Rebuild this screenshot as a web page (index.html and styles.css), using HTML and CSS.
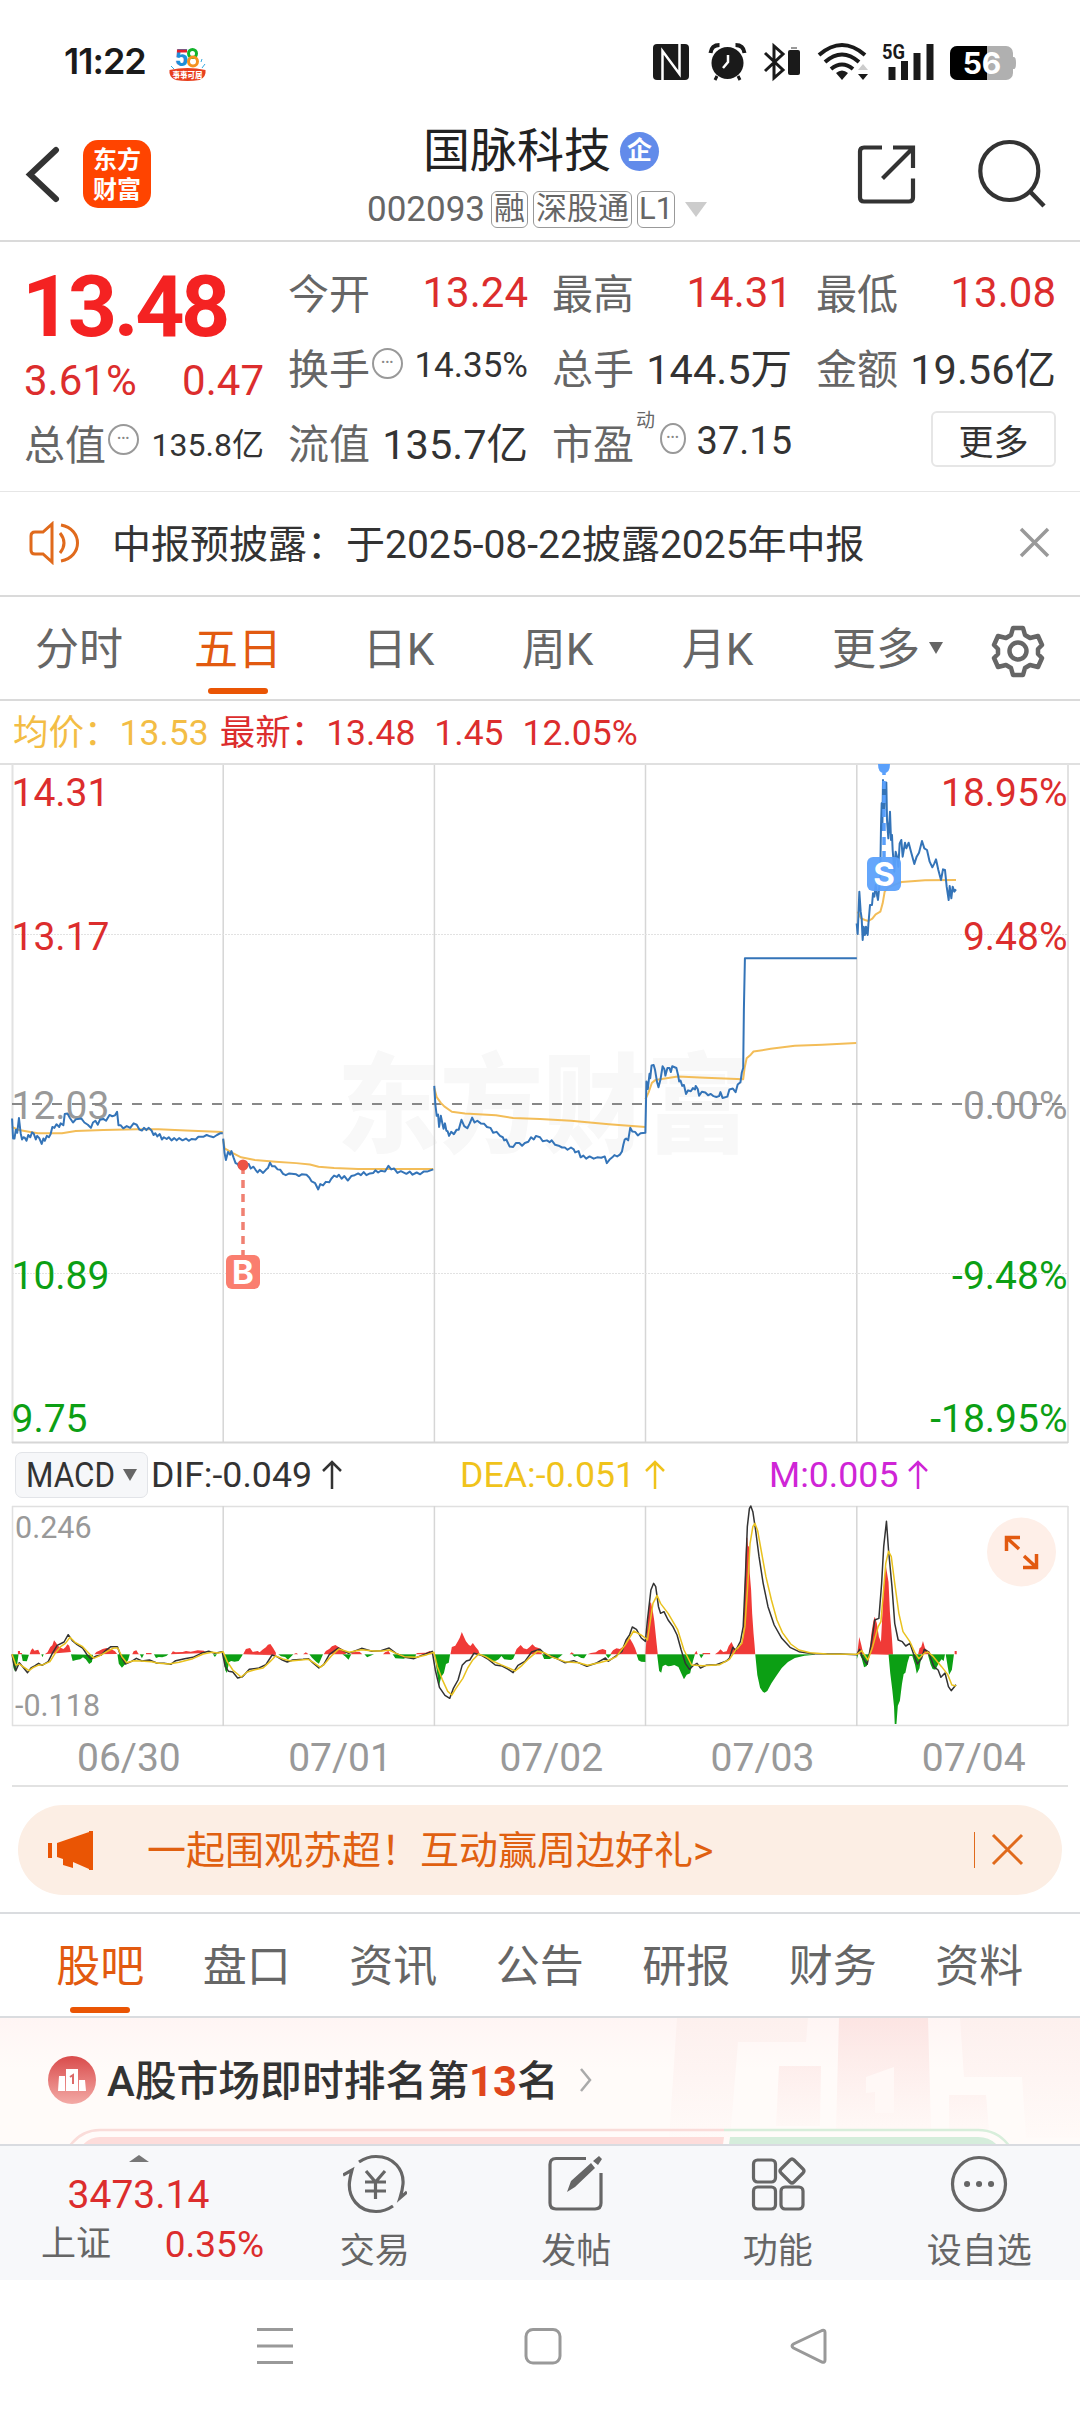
FILE: index.html
```html
<!DOCTYPE html>
<html lang="zh-CN">
<head>
<meta charset="utf-8">
<title>国脉科技 002093</title>
<link rel="stylesheet" href="styles.css">
</head>
<body>
<div class="app">

<div class="status">
  <span class="clock">11:22</span>
  <svg class="promo" width="42" height="44" viewBox="167 42 42 44">
    <text x="175" y="66" class="promo-digit" fill="#1c8fd8">5</text>
    <path d="M177 51h10" stroke="#e0202c" stroke-width="3"/>
    <circle cx="192.500" cy="53.500" r="4" fill="none" stroke="#12b32b" stroke-width="3"/>
    <circle cx="193" cy="61.500" r="4.500" fill="none" stroke="#f5921e" stroke-width="3"/>
    <path d="M171 66l3 3M205 64l-3 4M201 62l1-3" stroke="#35a9e0" stroke-width="1"/>
    <path d="M169.500 70q18-4 36 0q1 7-6 10q-12 2-24 0q-7-3-6-10z" fill="#e8401f"/>
    <text x="172.500" y="78" class="promo-tag">事事可居</text>
  </svg>
  <svg class="sys" width="370" height="44" viewBox="650 40 370 44">
    <rect x="653" y="44" width="36" height="36" rx="4" fill="#1a1a1a"/>
    <path d="M662.500 80V51l17 23V44" fill="none" stroke="#fff" stroke-width="2.500"/>
    <circle cx="727.500" cy="63" r="16" fill="#1a1a1a"/>
    <path d="M717 76l-2 4M738 76l2 4" stroke="#1a1a1a" stroke-width="3"/>
    <path d="M710.500 53q1-8 9-8M744.500 53q-1-8-9-8" fill="none" stroke="#1a1a1a" stroke-width="4"/>
    <path d="M728 55v7l-5 6" fill="none" stroke="#fff" stroke-width="2.500"/>
    <path d="M765 53l18 17-9 8V46l9 8-18 17" fill="none" stroke="#1a1a1a" stroke-width="3"/>
    <rect x="788" y="50" width="12" height="25" rx="2" fill="#1a1a1a"/><path d="M791 48h6" stroke="#999" stroke-width="2"/>
    <path d="M819 55q23-20 46 0M825 62q17-15 34 0M831 69q11-9 22 0" fill="none" stroke="#1a1a1a" stroke-width="4"/>
    <path d="M836 73q6-5 12 0l-6 7z" fill="#1a1a1a"/>
    <path d="M858 70h10l-5-6z" fill="#ccc"/><path d="M858 74h10l-5 6z" fill="#1a1a1a"/>
    <text x="882" y="59" class="net" textLength="23" lengthAdjust="spacingAndGlyphs">5G</text>
    <path d="M892 67v13M904.500 61v19M917 53v27M930 44v36" stroke="#1a1a1a" stroke-width="7"/>
    <path d="M1010 46h-4h-49a7 7 0 0 0-7 7v20a7 7 0 0 0 7 7h49a7 7 0 0 0 7-7v-4h1q2 0 2-6t-2-6h-1v-4a7 7 0 0 0-7-7z" fill="#b0b0b0"/>
    <path d="M987 46h-30a7 7 0 0 0-7 7v20a7 7 0 0 0 7 7h30z"/>
    <text x="982" y="74" class="charge">56</text>
  </svg>
</div>

<header class="top">
  <svg class="back" width="36" height="60" viewBox="24 144 36 60"><path d="M56 150L30 174.500L56 199" fill="none" stroke="#333" stroke-width="6" stroke-linecap="round"/></svg>
  <div class="logo"><span>东方</span><span>财富</span></div>
  <div class="stock">
    <div class="name">国脉科技<span class="corp">企</span></div>
    <div class="code">002093<span class="tag">融</span><span class="tag">深股通</span><span class="tag level">L1</span><i class="down"></i></div>
  </div>
  <svg class="tools" width="190" height="76" viewBox="856 138 190 76" fill="none" stroke="#333" stroke-width="4.200">
    <path d="M882 147.500H864q-4 0-4 4V197.500q0 4 4 4H909q4 0 4-4V178.500M893 147.500H913V168M882.500 178.500L913 148"/>
    <circle cx="1009.300" cy="171" r="29"/><path d="M1030 191.500L1044 206" stroke-width="4.500"/>
  </svg>
</header>

<section class="quote">
  <div class="col">
    <div class="price">13.48</div>
    <div class="row change"><span>3.61%</span><span>0.47</span></div>
    <div class="row"><label>总值</label><i class="info">•••</i><b class="s">135.8亿</b></div>
  </div>
  <div class="col">
    <div class="row"><label>今开</label><b class="up">13.24</b></div>
    <div class="row"><label>换手</label><i class="info">•••</i><b class="m">14.35%</b></div>
    <div class="row"><label>流值</label><b>135.7亿</b></div>
  </div>
  <div class="col">
    <div class="row"><label>最高</label><b class="up">14.31</b></div>
    <div class="row"><label>总手</label><b>144.5万</b></div>
    <div class="row"><label>市盈</label><sup>动</sup><i class="info pe">•••</i><b class="l">37.15</b></div>
  </div>
  <div class="col">
    <div class="row"><label>最低</label><b class="up">13.08</b></div>
    <div class="row"><label>金额</label><b>19.56亿</b></div>
    <div class="row end"><button class="more">更多</button></div>
  </div>
</section>

<section class="notice">
  <svg width="52" height="44" viewBox="29 521 52 44" fill="none" stroke="#e06a1c" stroke-width="3"><path d="M52 524v38l-9-8h-8q-4 0-4-4V536q0-4 4-4h8zM60 533q8 10 0 20M61 525c22 4 22 32 0 36" /></svg>
  <p>中报预披露：于2025-08-22披露2025年中报</p>
  <svg width="32" height="32" viewBox="0 0 32 32"><path d="M2 2L29 29M29 2L2 29" stroke="#999" stroke-width="3.500"/></svg>
</section>

<nav class="periods">
  <span>分时</span><span class="on">五日</span><span>日K</span><span>周K</span><span>月K</span><span>更多<i class="tri"></i></span>
  <svg width="54" height="54" viewBox="0 0 54 54" fill="none" stroke="#666" stroke-width="4.500" stroke-linejoin="round"><path d="M22 4h10l2 7 5 3 8-2 4 9-4 4v5l4 4-4 9-8-2-5 3-2 7H22l-2-7-5-3-8 2-4-9 4-4v-5l-4-4 4-9 8 2 5-3z"/><circle cx="27" cy="27" r="8.500"/></svg>
</nav>

<div class="legend"><span class="avg">均价：13.53</span><span>最新：13.48</span><span>1.45</span><span>12.05%</span></div>

<svg class="chart" width="1080" height="682" viewBox="0 763 1080 682">
  <text class="mark" x="337" y="1144" textLength="412" lengthAdjust="spacingAndGlyphs">东方财富</text>
  <g fill="none" stroke="#d6d6d6" stroke-width="2">
    <path d="M0 764H1080" stroke-width="1.500"/>
    <path d="M12.500 764V1443M1068 764V1443" stroke="#e2e2e2" stroke-width="2"/>
    <path d="M223.200 765V1443M434.400 765V1443M645.500 765V1443M856.800 765V1443" stroke-width="1.500"/>
    <path d="M12 1442.500H1068"/>
    <path d="M12 934.500H1068M12 1273.500H1068" stroke="#e2e2e2" stroke-width="1" stroke-dasharray="2 1"/>
  </g>
  <g class="axis">
    <text x="11.500" y="805.500" class="r">14.31</text><text x="11.500" y="950" class="r">13.17</text><text x="11.500" y="1118.500" class="n">12.03</text><text x="11.500" y="1289" class="g">10.89</text><text x="11.500" y="1431.500" class="g">9.75</text>
    <g text-anchor="end"><text x="1067.500" y="805.500" class="r">18.95%</text><text x="1067.500" y="950" class="r">9.48%</text><text x="1067.500" y="1118.500" class="n">0.00%</text><text x="1067.500" y="1289" class="g">-9.48%</text><text x="1067.500" y="1431.500" class="g">-18.95%</text></g>
  </g>
  <path d="M12 1104H1066" stroke="#888" stroke-width="2" stroke-dasharray="10 10"/>
  <g transform="translate(0 760) scale(.34439 .44643)">
    <g class="avg-line">
      <polyline points="35,822 55,829 80,832 110,836 180,836 220,831 300,829 400,827 460,827 540,830 647,833"/>
      <polyline points="648,850 652,870 675,880 700,890 740,896 800,900 860,903 900,906 925,911 970,914 1040,916 1258,916"/>
      <polyline points="1261,735 1268,755 1280,768 1290,776 1312,788 1350,792 1440,796 1490,802 1568,804 1658,808 1768,816 1874,822"/>
      <polyline points="1874,760 1883,745 1893,723 1903,717 1968,709 2048,712 2158,715 2162,690 2168,668 2180,660 2188,653 2238,647 2308,640 2388,638 2486,634"/>
    </g>
    <g class="price-line">
      <polyline points="35,803 38,848 42,848 46,828 50,835 55,802 60,836 64,850 68,845 72,846 77,853 82,840 88,845 93,834 98,837 104,850 108,842 114,847 121,860 126,848 130,853 136,842 142,845 147,838 152,822 158,824 164,816 172,822 176,814 184,818 188,793 196,792 203,802 212,812 220,805 236,803 245,812 255,817 264,824 270,812 277,808 284,817 290,806 300,804 308,808 318,795 326,798 334,796 340,788 344,818 350,818 358,825 368,820 378,824 388,814 397,817 405,828 412,830 418,824 425,829 432,824 440,830 446,840 451,836 457,843 464,838 470,850 476,845 484,849 490,845 498,852 506,847 513,852 520,847 530,852 540,848 548,853 556,849 568,850 576,844 590,844 600,840 610,843 620,845 630,840 640,836 647,836"/>
      <polyline points="648,848 652,880 656,896 662,878 668,884 672,876 678,890 684,903 690,905 695,912 700,906 722,905 728,915 736,911 742,918 748,924 754,918 764,925 772,918 778,914 784,902 790,910 798,910 806,917 814,918 822,927 830,930 840,926 860,928 868,932 876,928 890,929 898,935 905,944 915,948 924,962 930,950 938,953 946,945 956,946 962,938 970,931 978,934 984,929 992,938 1000,932 1010,942 1020,932 1030,930 1040,926 1048,930 1056,923 1064,930 1074,926 1084,925 1090,919 1098,924 1106,920 1118,922 1128,909 1136,917 1144,915 1154,925 1164,921 1180,927 1190,922 1198,929 1210,924 1220,928 1230,922 1240,922 1258,917"/>
      <polyline points="1261,730 1264,770 1268,797 1272,794 1275,822 1280,797 1284,812 1288,826 1292,814 1296,830 1300,832 1304,842 1310,833 1318,838 1326,828 1332,828 1340,806 1348,820 1357,825 1364,814 1371,801 1378,812 1386,808 1396,814 1406,815 1414,822 1424,824 1432,835 1442,833 1452,842 1460,845 1464,852 1470,850 1480,866 1490,867 1498,858 1508,858 1516,864 1524,858 1534,855 1542,845 1550,850 1556,842 1568,845 1576,854 1588,852 1596,856 1602,852 1612,862 1622,864 1632,868 1640,868 1648,873 1658,868 1666,872 1670,879 1680,876 1686,890 1694,886 1702,893 1712,888 1724,893 1734,890 1746,891 1756,888 1762,903 1770,895 1778,890 1784,885 1792,888 1800,884 1806,877 1810,862 1814,850 1818,848 1824,852 1830,824 1836,832 1844,833 1852,841 1860,836 1874,835 1877,720 1881,737 1886,703 1888,713 1892,684 1898,683 1902,694 1908,722 1912,733 1918,715 1924,686 1929,692 1932,707 1938,690 1944,690 1948,699 1952,686 1964,690 1969,706 1972,720 1976,718 1981,730 1986,728 1992,748 1998,740 2006,742 2012,735 2018,738 2020,730 2026,737 2030,752 2038,743 2048,745 2056,751 2064,748 2072,753 2080,755 2088,753 2092,744 2098,757 2112,754 2118,738 2128,736 2136,744 2142,727 2150,722 2154,700 2158,690 2160,560 2163,444 2488,444"/>
    </g>
  </g>
  <g transform="translate(845 760) scale(.33333)">
    <polyline class="avg-line" points="38,455 48,475 60,480 70,483 82,476 92,463 106,455 113,430 119,395 130,382 170,366 240,361 333,360"/>
    <polyline class="price-line" points="35,490 38,522 43,395 47,455 50,475 53,540 56,500 60,525 63,500 68,525 70,495 75,435 81,435 84,400 88,410 92,375 96,405 99,420 103,380 106,330 108,200 110,130 112,210 114,60 118,150 121,70 124,68 126,180 130,235 135,155 138,240 141,225 143,270 148,335 152,275 156,290 160,320 164,250 169,240 173,290 180,248 184,265 191,248 198,275 208,312 215,290 222,278 231,243 238,265 246,270 254,305 262,322 268,310 273,298 280,330 288,360 294,328 300,330 305,380 311,420 314,378 319,415 323,380 328,395 333,388"/>
  </g>
  <path d="M243 1166V1255" stroke="#f08072" stroke-width="3.500" stroke-dasharray="8 6"/>
  <circle cx="243" cy="1165" r="5.500" fill="#ee5345"/>
  <rect x="226" y="1255" width="34" height="34" rx="6" fill="#fa7e6f"/><text class="bs" x="243" y="1284">B</text>
  <path d="M884 767V857" stroke="#5aa0fb" stroke-width="3.500" stroke-dasharray="8 6"/>
  <path d="M878 764h12q0 9-6 9t-6-9z" fill="#5aa0fb"/>
  <rect x="867" y="857" width="34" height="34" rx="6" fill="#5aa0fb" fill-opacity=".94"/><text class="bs" x="884" y="886">S</text>
</svg>

<div class="macd-bar">
  <span class="pill"><span class="condensed">MACD</span><i class="tri"></i></span>
  <span class="dif">DIF:-0.049<svg width="20" height="30" viewBox="0 0 20 30"><path d="M10 29V2M1 11L10 2L19 11"/></svg></span>
  <span class="dea">DEA:-0.051<svg width="20" height="30" viewBox="0 0 20 30"><path d="M10 29V2M1 11L10 2L19 11"/></svg></span>
  <span class="mm">M:0.005<svg width="20" height="30" viewBox="0 0 20 30"><path d="M10 29V2M1 11L10 2L19 11"/></svg></span>
</div>

<svg class="chart" width="1080" height="222" viewBox="0 1505 1080 222">
  <g fill="none" stroke="#d6d6d6" stroke-width="1.500">
    <path d="M12 1506.500H1068M12 1725.500H1068M12.500 1506V1726M1068 1506V1726" stroke="#e0e0e0"/>
    <path d="M223.200 1506V1726M434.400 1506V1726M645.500 1506V1726M856.800 1506V1726"/>
  </g>
  <g class="macd-axis"><text x="15" y="1538">0.246</text><text x="15" y="1716">-0.118</text></g>
  <g transform="translate(0 1440) scale(.34439 .33333)">
    <path fill="#f03a37" d="M52 643v-10h6v6h6v4zM86 643l4-12 5-6 5 7 5-1 6-2 6 14zM130 643l8-6 8-16 6-5 5-15 6 8 5 8 8 6 8 4 6-5 6-9 5 4 5 19zM274 643l6-7 8-4 10-5 12-3 14 4 10 6 6 8zM384 643l4-9 8-3 6 10 5 2zM424 643v-4h16v4zM496 643l6-9 8 3 20-1 10-3 14 2 20-4 18 1 6 7zM706 643l8-16 12-3 8 12 14-3 6 4 8-8 10-7 6-8 7-2 8 12 8 14v8zM852 643l8-4 6 4zM880 643l8-6 8 6zM940 643l6-10 10-6 8-8 10-4 10 7 10 6 10 8v7zM1018 643l6-6 20-2 8 8zM1112 643l6-6 10-4 6 10zM1206 643l6-4 24-1 12-5 8 10zM1308 643l4-22 10-4 8-14 5-10 6-17 4 10 8 18 8 10 5 4 7-9 8 12 8 10 4 12zM1494 643l6-16 12-12 8 10 10 3 8-7 8-8 8 8 12 4 8 18zM1654 643l6-6 8 6zM1706 643l10-4 14-2 8-6 12-4 10 4v12zM1772 643l8-12 10-6 10 2 8-6 8-14 8-14 6 4 8 14 6 14 6 18zM1874 643l6-90 4-56 6-11 6 30 4 28 6 60 4 39zM2016 643l6-11 4 11zM2040 643v-4h22v4z"/>
    <path fill="#f03a37" d="M2076 643L2086 635L2092 628L2100 636L2110 634L2116 618L2124 606L2132 624L2142 628L2152 612L2158 595L2161 480L2164 380L2167 293L2170 293L2172 318L2175 320L2177 400L2181 450L2184 520L2188 580L2191 615L2193 643z"/>
    <path fill="#f03a37" d="M2489 643l6-52 6 24 6 28zM2524 643l6-60 6-40 4-13 6 20 6 40 6 16 4-80 4-80 6-70 8 50 4 90 6 80 3 49zM2666 643l4-18 5-4 5-18 6 22 8 8 6 2 2 8zM2772 643v-10h6v10z"/>
    <path fill="#0c9f14" d="M35 643l4 40 5 12 6-24 4-28zM62 643l4 20 12 1 6-20zM120 643l3 9 4-9zM206 643l5 20 10-3 12-2 8-6 8 6 10 14 8-6 3-22zM341 643l4 28 9 12 10-11 8-12 5-17zM406 643l6 12 6-12zM447 643l6 11 8-3 10 1 12-4 6-5zM618 643l6 8 6-8zM648 643l6 48 5 8 6-32 6-4 10 2 12-2 10-16 2-4zM808 643l8 6 12 2 8 8 16-16zM898 643l8 10 12 12 8 6 6-14 6-14zM994 643l8 6 10 10 8-16zM1058 643l8 9 10-5 10-4zM1140 643l8 12 24 1 12-4 14 4 8-5 2-8zM1262 643l5 40 8 54 6-26 8-12 6-27 8-4 4-25zM1398 643l12 10 16 10 14-1 8-4 8-10 8 10 20 2 6-4 6-13zM1574 643l6 14 16 0 8-4 10 4 10-5 10-9zM1660 643l8 7 8-3 12 7 8 1 8-12zM1758 643l8 12 10-12zM1848 643l6 18 8 4 12 1v-23zM1908 643l6 50 6 5 4-19 8-5 8 5 8-1 10-3 12 6 10 23 6 14 8-14 10-4 8-36 6-21zM2030 643l6 12 8-12zM2193 643l6 62 8 38 8 12 5 3 8-5 12-23 14-22 16-24 18-18 20-12 28-7 30-3v-1zM2488 643v15l4-15zM2496 643l6 12 7 27 8-4 7-35zM2580 643l5 57 6 50 5 50 2 52h5l4-55 6-15 6-50 5-30 5-4 6-30 6-20 8 0 8 26 5 27 8-16 6-42zM2694 643l8 30 6 14 8 2 10-20 8-11 6 5 4-20zM2746 643l6 38 4 23 8-15 6-46z"/>
    <path stroke="#fff" stroke-opacity=".45" d="M35 643H2776"/>
    <g class="sig dif-line">
      <polyline points="35,643 40,672 46,692 56,668 66,680 80,698 90,684 102,677 112,670 122,676 140,665 152,640 166,616 186,606 198,584 210,602 224,614 240,624 254,646 264,657 280,648 294,645 306,632 322,620 341,620 350,646 364,672 382,664 396,655 412,663 434,660 455,669 476,670 496,673 510,662 536,656 560,652 584,640 606,634 624,640 645,635 654,680 664,694 676,696 690,714 704,710 724,688 752,684 772,674 790,645 804,650 820,660 834,666 850,660 880,658 896,656 908,668 926,684 940,674 956,644 982,624 1012,640 1050,625 1080,634 1106,632 1130,624 1150,640 1176,652 1202,656 1224,646 1255,634 1264,690 1276,742 1292,766 1306,775 1316,746 1330,720 1342,676 1354,663 1364,660 1376,640 1398,646 1418,658 1438,675 1458,678 1476,688 1490,698 1504,676 1524,664 1544,636 1568,628 1586,646 1610,652 1640,668 1666,662 1684,670 1704,679 1730,670 1744,662 1758,654 1766,664 1788,648 1806,634 1818,600 1828,585 1836,561 1848,568 1862,594 1874,604 1880,540 1890,450 1898,430 1904,440 1912,500 1918,520 1928,515 1940,540 1954,560 1966,585 1978,630 1990,670 2002,688 2014,676 2024,670 2034,684 2050,676 2080,674 2108,664 2118,655 2128,622 2136,632 2150,604 2158,560 2164,420 2170,260 2176,206 2180,198 2186,215 2194,270 2204,350 2216,430 2230,500 2248,555 2270,595 2294,622 2320,635 2360,641 2440,642 2488,644 2496,628 2504,652 2518,673 2530,610 2540,540 2552,535 2560,430 2566,320 2574,244 2580,330 2590,440 2598,550 2608,600 2620,605 2630,618 2642,610 2652,640 2664,672 2676,655 2684,628 2696,636 2712,680 2724,690 2732,712 2744,699 2754,740 2762,752 2776,734"/>
    </g>
    <g class="sig dea-line">
      <polyline points="35,643 46,675 56,672 70,682 84,692 96,683 110,676 125,674 145,665 160,640 176,620 190,610 203,592 218,607 240,620 258,640 272,655 290,647 310,635 330,624 342,624 354,650 368,668 388,662 408,663 440,665 462,670 490,672 520,667 560,656 590,642 615,637 635,639 648,635 660,665 676,690 700,711 718,696 740,689 764,684 784,665 800,648 824,658 844,663 874,660 895,658 910,667 930,682 944,670 962,648 984,627 1014,637 1050,629 1084,633 1110,633 1130,630 1150,640 1174,650 1210,652 1240,644 1260,637 1270,680 1284,718 1300,754 1312,765 1324,745 1344,715 1358,684 1372,661 1390,642 1410,650 1430,663 1454,674 1480,685 1496,693 1516,676 1536,655 1560,634 1580,638 1600,650 1640,665 1680,668 1706,676 1740,668 1770,660 1790,650 1815,615 1840,573 1860,584 1874,594 1880,600 1888,545 1896,490 1908,466 1918,490 1940,520 1968,570 1986,630 2008,675 2040,677 2090,674 2118,658 2136,630 2154,610 2163,560 2171,440 2178,310 2186,260 2192,250 2200,272 2210,330 2224,410 2240,480 2256,540 2272,578 2296,612 2320,630 2352,638 2400,642 2488,643 2502,632 2520,660 2534,620 2550,560 2558,545 2564,470 2572,370 2580,334 2588,350 2598,430 2610,520 2622,575 2642,605 2656,637 2668,656 2684,640 2694,636 2710,650 2734,680 2752,704 2764,735 2776,738"/>
    </g>
  </g>
  <circle cx="1021.500" cy="1552" r="34.500" fill="#feefe8"/>
  <path d="M1020 1537.500H1006.500V1551M1007 1538L1019 1549M1023 1567.500H1036.500V1554M1036 1567L1024 1556" fill="none" stroke="#e25a10" stroke-width="3.500"/>
</svg>
<div class="dates"><span>06/30</span><span>07/01</span><span>07/02</span><span>07/03</span><span>07/04</span></div>

<div class="banner">
  <svg width="46" height="42" viewBox="48 1828 46 42" fill="#ea5504"><path d="M48 1842h4v15h-4zM57 1842L89 1831V1868L73 1861V1867L63 1864V1858L57 1856zM89 1830h4v39h-4z"/></svg>
  <p>一起围观苏超！互动赢周边好礼&gt;</p>
  <i class="sep"></i>
  <svg width="34" height="34" viewBox="0 0 34 34"><path d="M2 2L31 31M31 2L2 31" stroke="#e06a1c" stroke-width="3"/></svg>
</div>

<nav class="sections"><span class="on">股吧</span><span>盘口</span><span>资讯</span><span>公告</span><span>研报</span><span>财务</span><span>资料</span></nav>

<section class="rank">
  <svg class="podium" width="1080" height="126" viewBox="0 2018 1080 126">
    <defs><linearGradient id="f" x1="0" y1="0" x2="0" y2="1"><stop offset="0" stop-color="#fbdfdd"/><stop offset="1" stop-color="#fff8f6"/></linearGradient>
    <linearGradient id="h" x1="0" y1="0" x2="0" y2="1"><stop offset="0" stop-color="#fdf0ee"/><stop offset="1" stop-color="#fffaf8"/></linearGradient></defs>
    <path fill="url(#h)" d="M677 2018H808L806 2042H738L730 2140H669zM960 2018H1080V2138H1026L1022 2077H964z"/>
    <path fill="url(#f)" opacity=".75" d="M839 2018H928L931 2130H836zM779 2066h42l-1 60h-44zM949 2095h37l3 35h-40z"/>
    <path fill="#fff8f6" d="M875 2113V2092L866 2093V2077L894 2067V2113z"/>
    <path d="M66 2152Q78 2130 100 2130H724" fill="none" stroke="#fadcd9" stroke-width="2.500"/>
    <path d="M724 2130H978Q1001 2130 1013 2152" fill="none" stroke="#d8eedb" stroke-width="2.500"/>
    <path d="M78 2152Q86 2137 100 2137H724L722 2152z" fill="#fddcda"/><path d="M730 2137H978Q994 2137 1002 2152H728z" fill="#d5eddb"/>
  </svg>
  <svg class="medal" width="48" height="48" viewBox="0 0 48 48"><defs><linearGradient id="c" x1="0" y1="0" x2="0" y2="1"><stop offset="0" stop-color="#d94b4b"/><stop offset="1" stop-color="#f3aaa6"/></linearGradient></defs><circle cx="24" cy="24" r="24" fill="url(#c)"/><path fill="#fff" d="M11 20h6v15h-7zM18 13h12v22H18zM31 24h6l1 11h-7z"/><path d="M22 21l3-2v9" fill="none" stroke="#dc6a68" stroke-width="2"/></svg>
  <p>A股市场即时排名第<em>13</em>名</p>
  <svg class="medal" width="14" height="26" viewBox="0 0 14 26"><path d="M2 2L11 13L2 24" fill="none" stroke="#aaa" stroke-width="2.500"/></svg>
</section>

<footer class="bar">
  <div class="index"><i class="upmark"></i><strong>3473.14</strong><div class="sz"><span>上证</span><b>0.35%</b></div></div>
  <div class="item"><svg width="64" height="60" viewBox="343 2154 64 60" fill="none" stroke="#666" stroke-width="3.200"><path d="M359 2162Q367 2156.500 376 2156.500C394 2156.500 404 2170 403 2184Q402.500 2190 400 2198L407 2192M393 2206Q385 2211.500 376 2211.500C358 2211.500 348 2197 349.500 2182Q350 2177 352 2170L343 2175M366 2171L375.500 2182L385 2171M365 2182h21M365 2191h21M375.500 2182V2199"/></svg>交易</div>
  <div class="item"><svg width="60" height="60" viewBox="548 2154 60 60" fill="none" stroke="#666" stroke-width="3.200"><path d="M588 2158.500H558q-6 0-6 6V2203q0 6 6 6H597q6 0 6-6V2173"/><path d="M569 2192l4-11L593 2163l4 5L577 2187zM595 2161l6-5 3 3-4 6z" fill="#666" stroke="none"/></svg>发帖</div>
  <div class="item"><svg width="60" height="60" viewBox="748 2154 60 60" fill="none" stroke="#666" stroke-width="3.200"><rect x="753.500" y="2160" width="22" height="22" rx="4"/><rect x="753.500" y="2187" width="22" height="22" rx="4"/><rect x="781" y="2187" width="22" height="22" rx="4"/><path d="M790 2160l-9 9q-2 2 0 4l9 9q2 2 4 0l9-9q2-2 0-4l-9-9q-2-2-4 0z"/></svg>功能</div>
  <div class="item"><svg width="60" height="60" viewBox="949 2154 60 60" fill="none" stroke="#666" stroke-width="3.200"><circle cx="979" cy="2184" r="26.500"/><path d="M967 2184h.1M979 2184h.1M991 2184h.1" stroke-width="6" stroke-linecap="round"/></svg>设自选</div>
</footer>

<div class="sysnav">
  <svg width="1080" height="132" viewBox="0 2280 1080 132" fill="none" stroke="#999" stroke-width="3"><path d="M257 2329.500H293M257 2346H293M257 2362.500H293"/><rect x="526" y="2329.500" width="34" height="33.500" rx="7"/><path d="M822 2330.500L793.500 2344q-3 2 0 4L822 2362q3 1 3-2V2332.500q0-3-3-2z"/></svg>
</div>
</div>
</body>
</html>
```
FILE: styles.css
```css
* { box-sizing: border-box; }
body { margin: 0; background: #fff; font-family: Roboto, "Noto Sans CJK SC", sans-serif; color: #333; }
p { margin: 0; }
i, em { font-style: normal; }
svg { display: block; flex: none; }
.app { width: 1080px; height: 2412px; display: flex; flex-direction: column; overflow: hidden; }
.app > * { flex: none; }

.status { height: 112px; padding: 40px 60px 0 64px; display: flex; }
.clock { width: 103px; height: 44px; font: 600 36px/43px Inter, sans-serif; letter-spacing: -1px; color: #1a1a1a; }
.promo { margin-top: 2px; overflow: visible; }
.promo-digit { font: 900 23px Roboto, sans-serif; }
.promo-tag { font: 900 7.500px "Noto Sans CJK SC", sans-serif; fill: #fff; }
.sys { margin-left: 441px; }
.net { font: 700 21px Roboto, sans-serif; fill: #1a1a1a; }
.charge { font: 700 30px Inter, sans-serif; fill: #fff; text-anchor: middle; }

.top { height: 130px; border-bottom: 2px solid #dadada; display: flex; align-items: flex-start; padding-left: 24px; }
.back { margin-top: 32px; }
.logo { width: 68px; height: 68px; margin: 28px 0 0 23px; border-radius: 15px; background: #ff4400; color: #fff; font: 700 24px/30px "Noto Sans CJK SC", sans-serif; display: flex; flex-direction: column; align-items: center; padding-top: 3px; }
.stock { width: 350px; margin: 8px 0 0 216px; }
.name { height: 62px; line-height: 60px; font-size: 47px; color: #222; padding-left: 56px; display: flex; align-items: center; }
.corp { width: 39px; height: 39px; margin-left: 9px; border-radius: 50%; background: #628bea; color: #fff; font-size: 25px; font-weight: 700; line-height: 37px; text-align: center; }
.code { height: 52px; margin-top: 1px; display: flex; align-items: center; font-size: 35px; color: #666; }
.tag { height: 37px; margin-left: 6px; border: 1.500px solid #999; border-radius: 6px; padding: 0 2px; font-size: 31px; line-height: 33px; }
.tag + .tag { margin-left: 5px; }
.level { padding: 0 1px; }
.down { margin-left: 10px; border: 11px solid transparent; border-top: 15px solid #ccc; border-bottom: 0; }
.tools { margin: 26px 0 0 139px; }

.quote { height: 250px; border-bottom: 1.500px solid #e6e6e6; padding: 12px 25px 0 26px; display: grid; grid-template-columns: 236px 238px 238px 238px; column-gap: 26px; }
.row { height: 75px; display: flex; align-items: center; font-size: 41px; white-space: nowrap; padding-bottom: 2px; margin-right: -2px; }
.row label { color: #666; }
.row b { font-weight: 400; font-size: 41.500px; margin-left: auto; }
.row .s { font-size: 32px; }
.row .m { font-size: 35px; }
.row .l { font-size: 38px; margin-left: 11px; }
.row .up { color: #dc2d2d; font-size: 42px; margin-top: 4px; }
.row.end { justify-content: flex-end; }
.price { height: 91px; line-height: 106px; margin-left: -4px; font-size: 86px; font-weight: 700; letter-spacing: -3.500px; color: #f42222; }
.row.change { height: 61px; padding: 9px 0 0; margin-left: -2px; font-size: 42px; justify-content: space-between; color: #dc2d2d; }
.change + .row { height: 73px; margin-left: -2px; }
.info { width: 31px; height: 31px; margin: -4px 0 0 2px; border: 2px solid #999; border-radius: 50%; font-size: 11px; line-height: 26px; text-align: center; color: #888; letter-spacing: .5px; }
.info.pe { margin-left: 5px; }
.row sup { font-size: 19px; line-height: 20px; margin-top: -40px; margin-left: 2px; color: #666; }
.more { width: 125px; height: 56px; margin-top: -3px; border: 2px solid #e6e6e6; border-radius: 6px; background: #fff; font: 35px/49px "Noto Sans CJK SC", sans-serif; color: #333; padding: 0; }

.notice { height: 105px; border-bottom: 2px solid #dadada; display: flex; align-items: center; padding: 0 29px 2px; font-size: 39px; }
.notice p { flex: 1; margin: -3px 0 0 31px; }

.periods { height: 104px; border-bottom: 2px solid #dadada; display: grid; grid-template-columns: 158px 160px 161px 157px 163px 177px 83px; align-items: center; justify-items: center; font-size: 44px; color: #666; }
.periods span, .sections span { height: 100%; line-height: 107px; position: relative; }
.on { color: #e25a10; }
.on::after { content: ""; position: absolute; left: 50%; margin-left: -30px; bottom: 10px; width: 60px; height: 6px; border-radius: 3px; background: #ea5504; }
.tri { display: inline-block; border: 7px solid transparent; border-top: 12px solid #666; border-bottom: 0; margin-left: 9px; vertical-align: 11px; }

.legend { height: 62px; line-height: 65px; padding-left: 13px; font-size: 35.500px; color: #dc2d2d; display: flex; }
.legend span { margin-right: 19px; }
.legend .avg { color: #f3bd45; margin-right: 11px; }

.mark { font: 900 108px "Noto Sans CJK SC", sans-serif; fill: #f8f8f8; }
.axis { font-size: 39px; }
.r { fill: #dc2d2d; } .n { fill: #999; } .g { fill: #0c9f14; }
.avg-line, .price-line, .avg-line polyline, .price-line polyline, .sig polyline { fill: none; vector-effect: non-scaling-stroke; stroke-linejoin: round; }
.avg-line { stroke: #f3bd58; stroke-width: 2px; }
.price-line { stroke: #3474b8; stroke-width: 2px; }
.sig { stroke-width: 1.500px; }
.dea-line { stroke: #e9c21f; }
.dif-line { stroke: #333; }
.bs { font: 700 33px Inter, sans-serif; fill: #fff; text-anchor: middle; }

.macd-bar { height: 60px; display: grid; grid-template-columns: 133px 308px 310px 1fr; padding-left: 15px; align-items: center; font-size: 35.700px; }
.pill { height: 46px; border: 1.500px solid #e2e4e8; border-radius: 7px; background: #f6f7f9; display: flex; align-items: center; padding-left: 10px; }
.pill .tri { margin-left: 0; }
.condensed { transform: scaleX(.88); transform-origin: left; width: 97px; }
.macd-bar > span:not(.pill) { display: flex; align-items: center; gap: 10px; }
.dif { padding-left: 3px; }
.macd-bar path { fill: none; stroke: currentColor; stroke-width: 2.500px; }
.dea { color: #f0c31b; padding-left: 4px; }
.mm { color: #cf25d6; padding-left: 3px; }
.macd-axis { font-size: 30.500px; fill: #999; }

.dates { height: 60px; margin: 0 12px; border-bottom: 2px solid #e2e2e2; display: grid; grid-template-columns: repeat(5, 1fr); font-size: 39px; line-height: 62px; color: #999; }
.dates span { padding-left: 65px; }

.banner { margin: 18px 18px 17px; height: 90px; border-radius: 45px; background: #fceee4; display: flex; align-items: center; padding: 0 37px 0 30px; font-size: 39px; color: #e06010; }
.banner p { margin: -6px 0 0 53px; flex: 1; }
.sep { width: 1.500px; height: 36px; background: #e06a1c; margin-right: 16px; }

.sections { height: 106px; border-top: 2px solid #dadcdf; border-bottom: 2px solid #dadcdf; display: grid; grid-template-columns: repeat(7, 146.500px); padding-left: 27px; justify-items: center; font-size: 44px; color: #666; }
.sections .on::after { bottom: 8px; }

.rank { height: 126px; background: linear-gradient(#fff5f4, #fffbf9 40%); display: flex; align-items: center; padding-left: 48px; position: relative; }
.podium { position: absolute; left: 0; top: 0; }
.rank > :not(.podium) { position: relative; }
.medal { margin-bottom: 3px; }
.rank p { margin: -7px 20px 0 11px; font-size: 41.800px; font-weight: 500; white-space: nowrap; }
.rank em { color: #e0461c; font-weight: 700; }

.bar { height: 136px; background: #f7f8fa; border-top: 2px solid #d9dbe0; display: grid; grid-template-columns: 274px repeat(4, 201.500px); color: #666; }
.index { display: flex; flex-direction: column; align-items: center; padding: 9px 0 0 3px; }
.upmark { border: 10px solid transparent; border-bottom: 7px solid #777; border-top: 0; }
.index strong { font-size: 39px; font-weight: 400; line-height: 46px; margin-top: 10px; color: #dc2d2d; }
.sz { align-self: stretch; display: flex; justify-content: space-between; padding: 0 10px 0 38px; font-size: 35px; line-height: 54px; }
.sz b { font-size: 37px; font-weight: 400; color: #dc2d2d; }
.item { display: flex; flex-direction: column; align-items: center; padding-top: 8px; font-size: 35px; line-height: 76px; }
.sysnav { height: 132px; }
```
